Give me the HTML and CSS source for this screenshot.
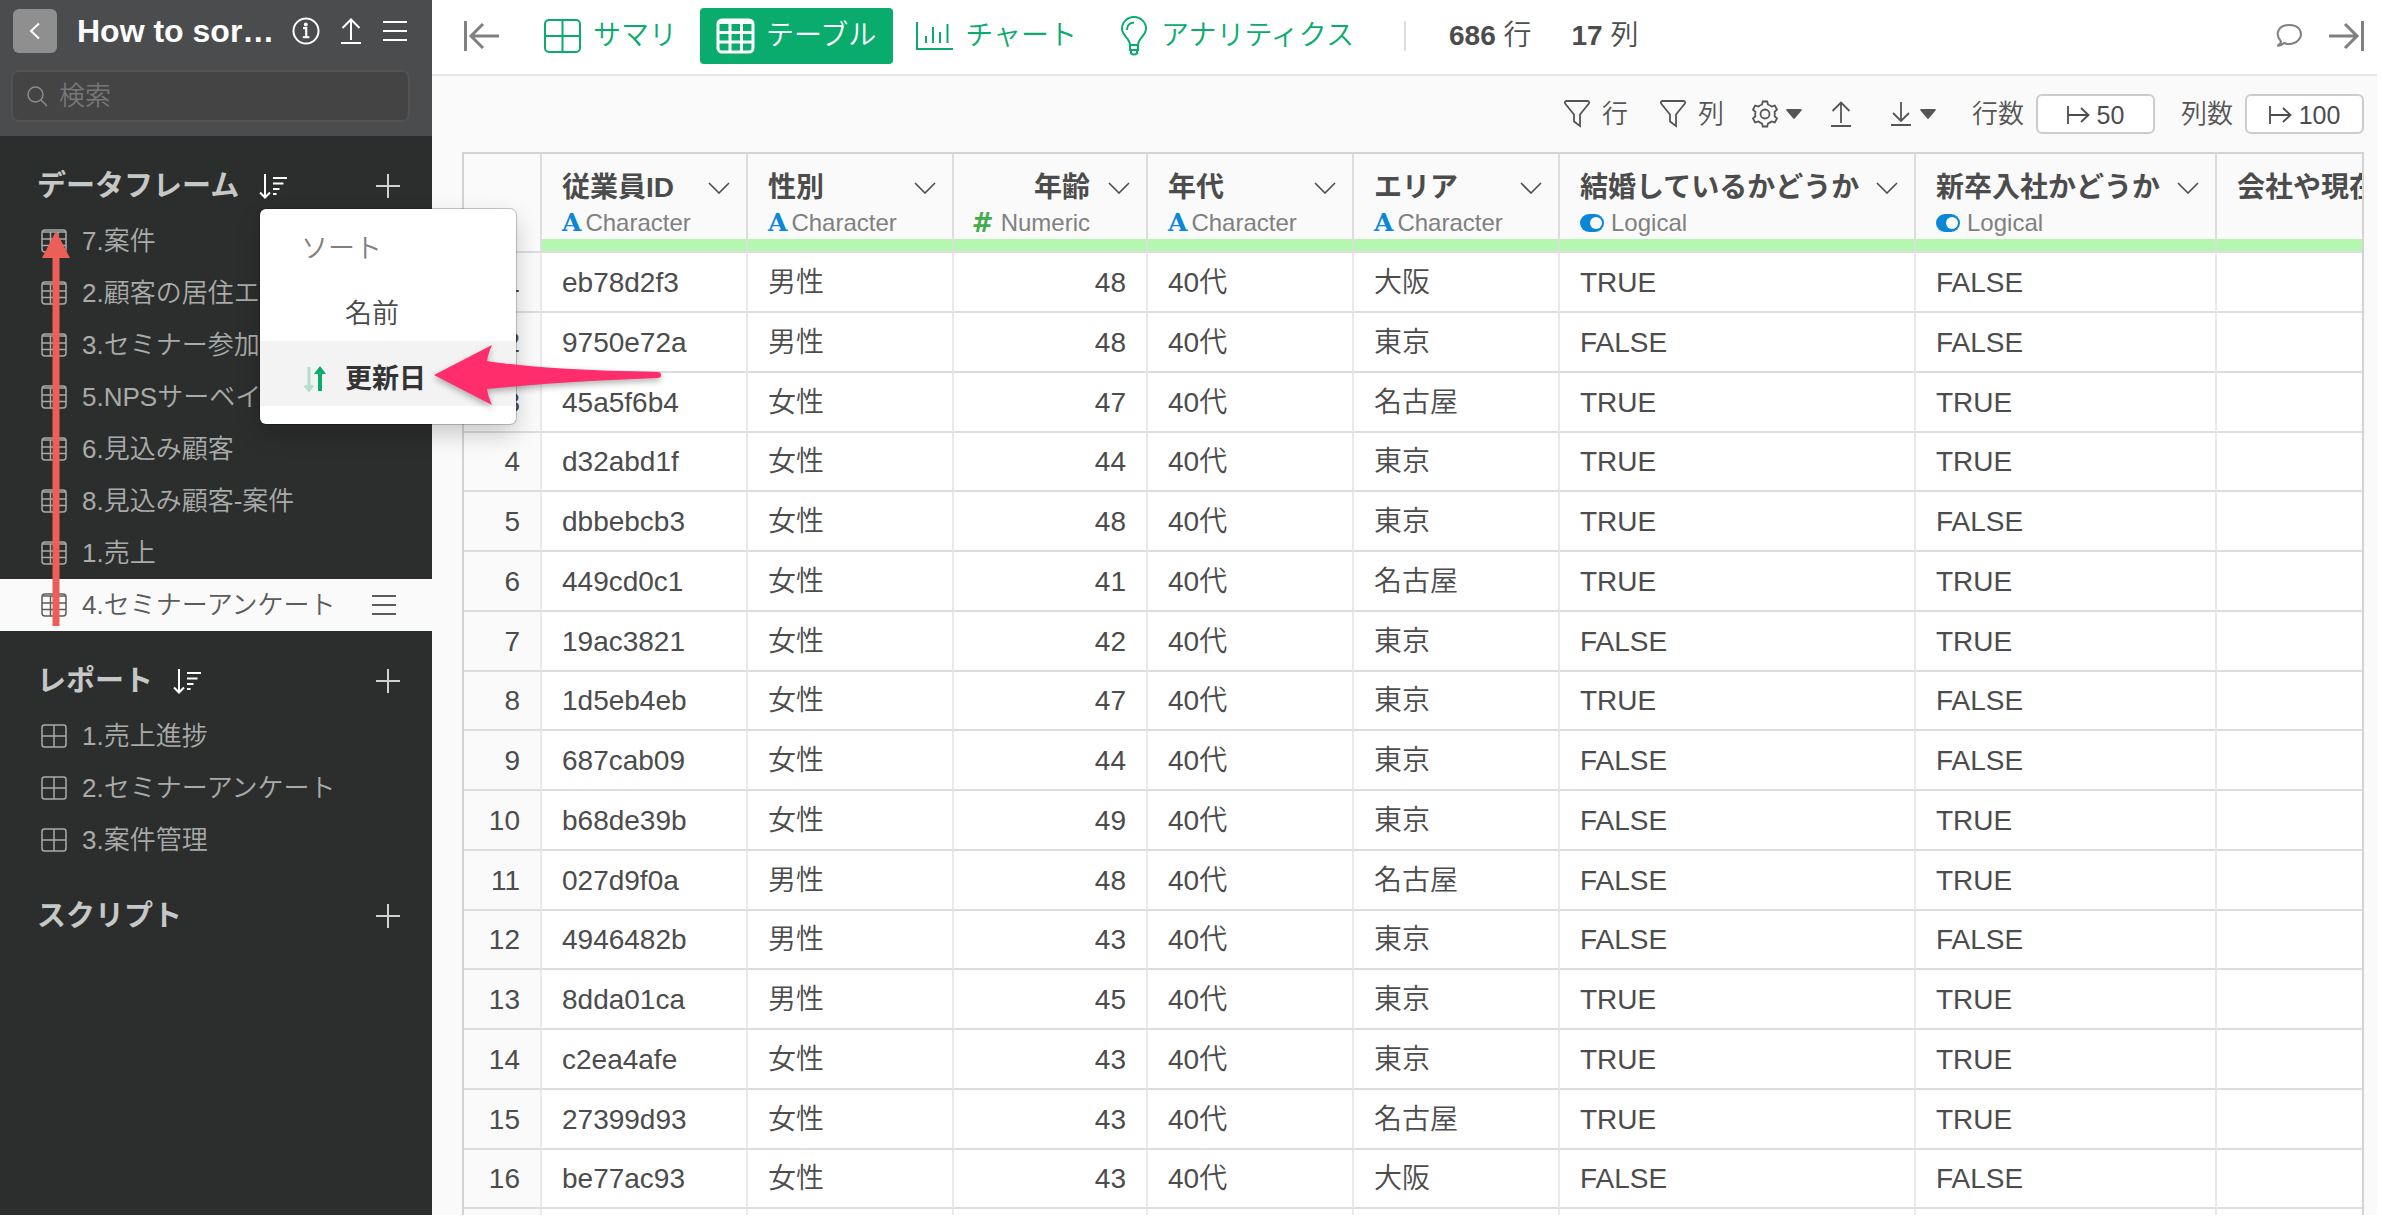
FILE: index.html
```html
<!DOCTYPE html>
<html lang="ja">
<head>
<meta charset="utf-8">
<title>データフレーム</title>
<link rel="stylesheet" href="styles.css">
</head>
<body>
<svg class="defs" aria-hidden="true">
  <symbol id="grid3" viewBox="0 0 26 24">
    <rect x="1" y="1" width="24" height="22" rx="3"/>
    <path d="M1.500 3h23"/>
    <path d="M1 10h24M1 16.500h24M9.500 3v20M17 3v20"/>
  </symbol>
  <symbol id="grid2" viewBox="0 0 26 24">
    <rect x="1" y="1" width="24" height="22" rx="2.500"/>
    <path d="M1 12h24M13 1v22"/>
  </symbol>
  <symbol id="sort" viewBox="0 0 28 26">
    <path d="M6 1v23M1 19.500l5 5 5-5M14 5h14M14 10.500h10.500M14 16h6.500M14 21h3.500"/>
  </symbol>
  <symbol id="plus" viewBox="0 0 24 24"><path d="M12 0v24M0 12h24"/></symbol>
  <symbol id="bars" viewBox="0 0 26 22"><path d="M1 2h24M1 11h24M1 20h24"/></symbol>
  <symbol id="up" viewBox="0 0 22 26"><path d="M11 22V2M2.500 10L11 1.500 19.500 10M1 25h20"/></symbol>
  <symbol id="down" viewBox="0 0 22 26"><path d="M11 1v19M3 12l8 8 8-8M1 24h20"/></symbol>
  <symbol id="chev" viewBox="0 0 22 12"><path d="M1 1l10 10L21 1"/></symbol>
  <symbol id="caret" viewBox="0 0 16 10"><path d="M1.500 0h13a1 1 0 0 1 .8 1.800L9 9.200a1.400 1.400 0 0 1-2 0L.7 1.800A1 1 0 0 1 1.500 0z"/></symbol>
  <symbol id="filter" viewBox="0 0 26 28"><path d="M2 1h22q2 1 .5 3L16 14.500V26l-6-4.500v-7L1.500 4Q0 2 2 1z"/></symbol>
  <symbol id="limit" viewBox="0 0 24 18"><path d="M1 0v18M1 9h20M14 2l7.500 7-7.500 7"/></symbol>
  <symbol id="toggle" viewBox="0 0 24 18"><rect x="0" y="0" width="24" height="18" rx="9" fill="#0a87d6"/><circle cx="16" cy="9" r="6" fill="#fafafa"/></symbol>
</svg>
<div class="app">
  <aside class="sidebar">
    <header class="project">
      <div class="project-row">
        <button class="back" aria-label="戻る"><svg width="12" height="18" viewBox="0 0 12 18"><path d="M10 1.500L2 9l8 7.500"/></svg></button>
        <h1>How to sor…</h1>
        <button aria-label="情報"><svg width="28" height="28" viewBox="0 0 28 28"><circle cx="14" cy="14" r="12.500"/><path d="M11 11.200h3.200V20" stroke-width="2.200"/><path d="M10.800 20.200h6.600"/><circle cx="13.800" cy="7.600" r="1" fill="currentColor"/></svg></button>
        <button aria-label="公開"><svg width="22" height="26"><use href="#up"/></svg></button>
        <button aria-label="メニュー"><svg width="26" height="22"><use href="#bars"/></svg></button>
      </div>
      <label class="search">
        <svg width="20" height="20" viewBox="0 0 20 20"><circle cx="8.500" cy="8.500" r="7.500"/><path d="M14 14l6 6"/></svg>
        <input type="text" placeholder="検索" aria-label="検索">
      </label>
    </header>

    <section>
      <div class="section-head">
        <h2>データフレーム</h2>
        <button class="sort" aria-label="ソート"><svg width="28" height="26"><use href="#sort"/></svg></button>
        <button aria-label="追加"><svg width="24" height="24"><use href="#plus"/></svg></button>
        <div class="menu">
          <p>ソート</p>
          <button>名前</button>
          <button class="on"><svg width="22" height="26" viewBox="0 0 22 26"><path d="M5 1v22M1 19.500l4 4.500 4-4.500" stroke="#b3dfcb" stroke-width="3"/><path d="M16 25V4" stroke="#0aac6c" stroke-width="4"/><path d="M16 0l6 8H10z" fill="#0aac6c" stroke="none"/></svg>更新日</button>
        </div>
      </div>
      <ul class="items">
        <li><a href="#"><svg width="26" height="24"><use href="#grid3"/></svg>7.案件</a></li>
        <li><a href="#"><svg width="26" height="24"><use href="#grid3"/></svg>2.顧客の居住エリア</a></li>
        <li><a href="#"><svg width="26" height="24"><use href="#grid3"/></svg>3.セミナー参加者</a></li>
        <li><a href="#"><svg width="26" height="24"><use href="#grid3"/></svg>5.NPSサーベイ</a></li>
        <li><a href="#"><svg width="26" height="24"><use href="#grid3"/></svg>6.見込み顧客</a></li>
        <li><a href="#"><svg width="26" height="24"><use href="#grid3"/></svg>8.見込み顧客-案件</a></li>
        <li><a href="#"><svg width="26" height="24"><use href="#grid3"/></svg>1.売上</a></li>
        <li class="selected"><a href="#"><svg width="26" height="24"><use href="#grid3"/></svg>4.セミナーアンケート</a><button aria-label="操作"><svg width="26" height="22"><use href="#bars"/></svg></button></li>
      </ul>
    </section>

    <section>
      <div class="section-head">
        <h2>レポート</h2>
        <button class="sort" aria-label="ソート"><svg width="28" height="26"><use href="#sort"/></svg></button>
        <button aria-label="追加"><svg width="24" height="24"><use href="#plus"/></svg></button>
      </div>
      <ul class="items">
        <li><a href="#"><svg width="26" height="24"><use href="#grid2"/></svg>1.売上進捗</a></li>
        <li><a href="#"><svg width="26" height="24"><use href="#grid2"/></svg>2.セミナーアンケート</a></li>
        <li><a href="#"><svg width="26" height="24"><use href="#grid2"/></svg>3.案件管理</a></li>
      </ul>
    </section>

    <section>
      <div class="section-head">
        <h2>スクリプト</h2>
        <button aria-label="追加"><svg width="24" height="24"><use href="#plus"/></svg></button>
      </div>
    </section>
  </aside>

  <main>
    <header class="topbar">
      <button class="edge" aria-label="左を閉じる"><svg width="36" height="32" viewBox="0 0 36 32"><path d="M1.500 1v30M35 16H7M19 4L7 16l12 12"/></svg></button>
      <nav>
        <button><svg width="37" height="34" viewBox="0 0 37 34"><rect x="1" y="1" width="35" height="32" rx="4"/><path d="M1 17h35M18.500 1v32"/></svg>サマリ</button>
        <button class="active"><svg width="37" height="34" viewBox="0 0 37 34"><rect x="1" y="1" width="35" height="32" rx="4"/><path d="M1 3h35" stroke-width="4"/><path d="M1 13.500h35M1 23h35M13 3v30M24.500 3v30"/></svg>テーブル</button>
        <button><svg width="37" height="28" viewBox="0 0 37 28"><path d="M1 0v27h36M10 14v7M17 5v16M24 10v11M31.500 2v19"/></svg>チャート</button>
        <button><svg width="32" height="40" viewBox="0 0 32 40"><path d="M13 29c0-7-8-9-8-16.500a12 11.500 0 0 1 24 0C29 20 21 22 21 29zM13 29v5h8v-5M14 34v3.500q3 2 6 0V34M10 14q0-7 7-7.500"/></svg>アナリティクス</button>
      </nav>
      <div class="counts"><span><b>686</b> 行</span><span><b>17</b> 列</span></div>
      <button class="comment" aria-label="コメント"><svg width="26" height="24" viewBox="0 0 26 24"><path d="M5 17.500C-2 9.500 3 1 13 1s12 6 12 9.500S21 20 13 20q-3 0-5-1-3 3-6.500 3Q4.500 20.500 5 17.500z"/></svg></button>
      <button class="edge" aria-label="右を閉じる"><svg width="36" height="32" viewBox="0 0 36 32"><path d="M34.500 1v30M1 16h28M17 4l12 12-12 12"/></svg></button>
    </header>

    <div class="toolbar">
      <button><svg width="26" height="28"><use href="#filter"/></svg>行</button>
      <button class="cols"><svg width="26" height="28"><use href="#filter"/></svg>列</button>
      <button class="drop" aria-label="設定"><svg width="26" height="28" viewBox="-13 -14 26 28"><path d="M-3-9.500L-2.200-12.500H2.200L3-9.500Q5-8.800 6.500-7.500L9.800-8.400 12-4.500 9.600-2.200Q10 0 9.600 2.200L12 4.500 9.800 8.400 6.500 7.500Q5 8.800 3 9.500L2.200 12.500H-2.200L-3 9.500Q-5 8.800-6.500 7.500L-9.800 8.400-12 4.500-9.600 2.200Q-10 0-9.600-2.200L-12-4.500-9.800-8.400-6.500-7.500Q-5-8.800-3-9.500z"/><circle r="4.500"/></svg><svg class="solid" width="16" height="10"><use href="#caret"/></svg></button>
      <button class="upload" aria-label="アップロード"><svg width="22" height="26"><use href="#up"/></svg></button>
      <button class="drop download" aria-label="ダウンロード"><svg width="22" height="26"><use href="#down"/></svg><svg class="solid" width="16" height="10"><use href="#caret"/></svg></button>
      <div class="limit"><span id="rows-label">行数</span><button aria-labelledby="rows-label"><svg width="24" height="18"><use href="#limit"/></svg>50</button></div>
      <div class="limit"><span id="cols-label">列数</span><button aria-labelledby="cols-label"><svg width="24" height="18"><use href="#limit"/></svg>100</button></div>
    </div>

    <div class="sheet">
      <table>
        <colgroup><col class="c-no"><col class="c-m"><col class="c-m"><col class="c-s"><col class="c-m"><col class="c-m"><col class="c-xl"><col class="c-l"><col></colgroup>
        <thead>
          <tr>
            <th></th>
            <th><div class="name">従業員ID<svg width="22" height="12"><use href="#chev"/></svg></div><div class="type"><b class="chr">A</b>Character</div><div class="fill"></div></th>
            <th><div class="name">性別<svg width="22" height="12"><use href="#chev"/></svg></div><div class="type"><b class="chr">A</b>Character</div><div class="fill"></div></th>
            <th class="num"><div class="name">年齢<svg width="22" height="12"><use href="#chev"/></svg></div><div class="type"><b class="hash">#</b>Numeric</div><div class="fill"></div></th>
            <th><div class="name">年代<svg width="22" height="12"><use href="#chev"/></svg></div><div class="type"><b class="chr">A</b>Character</div><div class="fill"></div></th>
            <th><div class="name">エリア<svg width="22" height="12"><use href="#chev"/></svg></div><div class="type"><b class="chr">A</b>Character</div><div class="fill"></div></th>
            <th><div class="name">結婚しているかどうか<svg width="22" height="12"><use href="#chev"/></svg></div><div class="type"><svg width="24" height="18"><use href="#toggle"/></svg>Logical</div><div class="fill"></div></th>
            <th><div class="name">新卒入社かどうか<svg width="22" height="12"><use href="#chev"/></svg></div><div class="type"><svg width="24" height="18"><use href="#toggle"/></svg>Logical</div><div class="fill"></div></th>
            <th><div class="name">会社や現在</div><div class="type"></div><div class="fill"></div></th>
          </tr>
        </thead>
        <tbody>
          <tr><th>1</th><td>eb78d2f3</td><td>男性</td><td>48</td><td>40代</td><td>大阪</td><td>TRUE</td><td>FALSE</td><td></td></tr>
          <tr><th>2</th><td>9750e72a</td><td>男性</td><td>48</td><td>40代</td><td>東京</td><td>FALSE</td><td>FALSE</td><td></td></tr>
          <tr><th>3</th><td>45a5f6b4</td><td>女性</td><td>47</td><td>40代</td><td>名古屋</td><td>TRUE</td><td>TRUE</td><td></td></tr>
          <tr><th>4</th><td>d32abd1f</td><td>女性</td><td>44</td><td>40代</td><td>東京</td><td>TRUE</td><td>TRUE</td><td></td></tr>
          <tr><th>5</th><td>dbbebcb3</td><td>女性</td><td>48</td><td>40代</td><td>東京</td><td>TRUE</td><td>FALSE</td><td></td></tr>
          <tr><th>6</th><td>449cd0c1</td><td>女性</td><td>41</td><td>40代</td><td>名古屋</td><td>TRUE</td><td>TRUE</td><td></td></tr>
          <tr><th>7</th><td>19ac3821</td><td>女性</td><td>42</td><td>40代</td><td>東京</td><td>FALSE</td><td>TRUE</td><td></td></tr>
          <tr><th>8</th><td>1d5eb4eb</td><td>女性</td><td>47</td><td>40代</td><td>東京</td><td>TRUE</td><td>FALSE</td><td></td></tr>
          <tr><th>9</th><td>687cab09</td><td>女性</td><td>44</td><td>40代</td><td>東京</td><td>FALSE</td><td>FALSE</td><td></td></tr>
          <tr><th>10</th><td>b68de39b</td><td>女性</td><td>49</td><td>40代</td><td>東京</td><td>FALSE</td><td>TRUE</td><td></td></tr>
          <tr><th>11</th><td>027d9f0a</td><td>男性</td><td>48</td><td>40代</td><td>名古屋</td><td>FALSE</td><td>TRUE</td><td></td></tr>
          <tr><th>12</th><td>4946482b</td><td>男性</td><td>43</td><td>40代</td><td>東京</td><td>FALSE</td><td>FALSE</td><td></td></tr>
          <tr><th>13</th><td>8dda01ca</td><td>男性</td><td>45</td><td>40代</td><td>東京</td><td>TRUE</td><td>TRUE</td><td></td></tr>
          <tr><th>14</th><td>c2ea4afe</td><td>女性</td><td>43</td><td>40代</td><td>東京</td><td>TRUE</td><td>TRUE</td><td></td></tr>
          <tr><th>15</th><td>27399d93</td><td>女性</td><td>43</td><td>40代</td><td>名古屋</td><td>TRUE</td><td>TRUE</td><td></td></tr>
          <tr><th>16</th><td>be77ac93</td><td>女性</td><td>43</td><td>40代</td><td>大阪</td><td>FALSE</td><td>FALSE</td><td></td></tr>
          <tr><th></th><td></td><td></td><td></td><td></td><td></td><td></td><td></td><td></td></tr>
        </tbody>
      </table>
    </div>
  </main>

  <svg class="mark mark-red" width="28" height="395" viewBox="0 0 28 395"><path d="M14 0l14 27H17.500v368h-7V27H0z" fill="#ec5f58"/></svg>
  <svg class="mark mark-pink" width="230" height="64" viewBox="0 0 230 64"><path d="M0 31L58 1q-4 9-5 16Q110 26 224 28q3 0 3 3t-3 3Q120 38 53 45q1 7 5 16z" fill="#ff2d6b"/></svg>
</div>
</body>
</html>
```
FILE: styles.css
```css
* { box-sizing: border-box; }

body {
  margin: 0;
  background: #fff;
  color: #4c4c4c;
  font: 350 27px/34px "Liberation Sans", "Noto Sans CJK JP", sans-serif;
}

h1, h2, p, ul { margin: 0; padding: 0; }
ul { list-style: none; }
a { color: inherit; text-decoration: none; }
b { font-weight: 700; }

button {
  display: flex;
  align-items: center;
  padding: 0;
  border: 0;
  background: none;
  color: inherit;
  font: inherit;
  white-space: nowrap;
}

svg {
  display: block;
  flex: none;
  fill: none;
  stroke: currentColor;
  stroke-width: 2;
  overflow: visible;
}
svg.solid { fill: currentColor; stroke: none; }
.defs { position: absolute; width: 0; height: 0; }
#toggle { stroke: none; }

.app {
  position: relative;
  display: flex;
  height: calc(100vh - 5px);
  margin-right: 5px;
  background: #fafafa;
}

/* Sidebar */
.sidebar {
  flex: none;
  width: 432px;
  background: #2c2e2d;
  color: #a9abaa;
}
.project {
  display: flex;
  flex-direction: column;
  gap: 17px;
  padding: 9px 22px 14px 11px;
  background: #4b4c4d;
  color: #fff;
}
.project-row {
  display: flex;
  align-items: center;
  gap: 20px;
  height: 44px;
  padding: 0 2px;
}
.back {
  flex: none;
  justify-content: center;
  width: 44px;
  height: 44px;
  border-radius: 6px;
  background: #8f8f8f;
}
h1 {
  flex: 1;
  min-width: 0;
  font-size: 32px;
  font-weight: 700;
  white-space: nowrap;
}
.search {
  display: flex;
  align-items: center;
  gap: 12px;
  height: 52px;
  padding: 0 14px;
  border: 2px solid #525252;
  border-radius: 8px;
  background: #444;
  color: #8c8c8c;
}
.search input {
  flex: 1;
  min-width: 0;
  padding: 0;
  border: 0;
  outline: 0;
  background: none;
  color: #ccc;
  font: inherit;
  font-size: 26px;
}
.search input::placeholder { color: #777; opacity: 1; }
.search svg { stroke-width: 1.500; }

.section-head {
  position: relative;
  display: flex;
  align-items: center;
  height: 58px;
  margin-top: 21px;
  padding: 0 32px 0 37px;
  color: #d0d2d1;
}
.section-head > button { margin-left: auto; }
.section-head > .sort { margin-left: 20px; color: #fff; }
h2 { font-size: 29px; font-weight: 700; color: #c6c8c7; }

.items li {
  display: flex;
  align-items: center;
  justify-content: space-between;
  height: 52px;
  padding: 0 35px 0 41px;
}
.items a {
  display: flex;
  align-items: center;
  gap: 15px;
  font-size: 26px;
  white-space: nowrap;
}
.items a svg { stroke-width: 1.500; }
.items .selected { background: #fafafa; color: #5c5c5c; }

.menu {
  position: absolute;
  z-index: 2;
  top: 52px;
  left: 260px;
  width: 256px;
  padding: 2px 0 18px;
  border-radius: 6px;
  background: #fff;
  color: #4a4a4a;
  box-shadow: 0 0 0 1px rgba(0, 0, 0, .2), 0 10px 24px rgba(0, 0, 0, .2);
}
.menu p, .menu button {
  display: flex;
  align-items: center;
  width: 100%;
  height: 65px;
  padding: 10px 0 0 85px;
}
.menu p { padding-left: 41px; color: #808080; }
.menu .on {
  gap: 19px;
  padding-left: 44px;
  background: #f3f3f3;
  color: #333;
  font-weight: 700;
}

/* Main column */
main {
  display: flex;
  flex: 1;
  flex-direction: column;
  min-width: 0;
}
.topbar {
  display: flex;
  align-items: center;
  height: 76px;
  padding: 8px 13px 10px 32px;
  border-bottom: 2px solid #e6e6e6;
  background: #fff;
  font-size: 28px;
}
.edge { color: #808080; }
.edge svg { stroke-width: 3; }
.topbar nav {
  display: flex;
  gap: 6px;
  margin: 0 33px 0 27px;
}
.topbar nav button {
  gap: 12px;
  height: 56px;
  padding: 0 17px;
  border-radius: 4px;
  color: #09ac6c;
}
.topbar nav .active { background: #09ac6c; color: #fff; }
.active svg { stroke-width: 3; }
.counts {
  display: flex;
  flex: 1;
  gap: 40px;
  padding-left: 43px;
  border-left: 2px solid #ddd;
  line-height: 30px;
}
.comment { margin-right: 26px; color: #808080; }

.toolbar {
  display: flex;
  align-items: center;
  justify-content: flex-end;
  height: 76px;
  padding: 0 13px;
  color: #555;
  font-size: 26px;
}
.toolbar svg:not(.solid) { stroke-width: 1.800; }
.toolbar > button { gap: 12px; margin-right: 32px; }
.toolbar > .cols { margin-right: 28px; }
.toolbar > .drop { gap: 8px; margin-right: 28px; }
.toolbar > .upload { margin-right: 38px; }
.toolbar > .download { margin-right: 36px; }
.limit {
  display: flex;
  align-items: center;
  gap: 12px;
}
.limit + .limit { margin-left: 26px; }
.limit button {
  justify-content: center;
  gap: 6px;
  width: 119px;
  height: 40px;
  padding-top: 2px;
  border: 2px solid #ccc;
  border-radius: 6px;
  background: #fff;
  color: #4c4c4c;
  font-size: 25px;
}

.sheet {
  flex: 1;
  min-height: 0;
  margin: 0 13px 0 30px;
  overflow: hidden;
  border: 2px solid #d3d3d3;
  border-bottom: 0;
  background: #fff;
}
table {
  width: 100%;
  table-layout: fixed;
  border-collapse: separate;
  border-spacing: 0;
}
.c-no { width: 78px; }
.c-s { width: 194px; }
.c-m { width: 206px; }
.c-l { width: 301px; }
.c-xl { width: 356px; }

th, td {
  overflow: hidden;
  padding: 1px 20px 0;
  border: 0 solid #ddd;
  border-right-color: #e9e9e9;
  border-width: 0 2px 2px 0;
  font-size: 28px;
  text-align: left;
  white-space: nowrap;
}
th:last-child, td:last-child { border-right: 0; }
thead th {
  height: 99px;
  padding: 17px 0 0;
  border-right-color: #ddd;
  background: #fafafa;
  vertical-align: top;
}
tbody tr { height: 60px; }
tbody tr:nth-child(4n) { height: 59px; }
tbody th { background: #fafafa; font-weight: 350; text-align: right; }
tbody td:nth-child(4) { text-align: right; }

.name {
  display: flex;
  align-items: center;
  justify-content: space-between;
  height: 34px;
  padding: 0 16px 0 20px;
  font-weight: 700;
}
.name svg { stroke-width: 1.600; }
.type {
  display: flex;
  align-items: center;
  gap: 4px;
  height: 30px;
  margin: 3px 0 1px;
  padding-left: 20px;
  color: #808080;
  font-size: 24px;
  font-weight: 350;
}
.type svg { margin-right: 3px; }
.fill { height: 12px; background: #b4f7b1; }
.num .name { justify-content: flex-end; gap: 18px; }
.num .type { justify-content: flex-end; gap: 7px; padding-right: 56px; }
.chr { color: #0a87d6; font-family: "DejaVu Serif", serif; font-size: 25px; }
.hash { color: #43ab4b; font-family: "DejaVu Sans", sans-serif; font-size: 26px; }

/* Annotations drawn over the window */
.mark { position: absolute; z-index: 3; stroke: none; }
.mark-red { left: 42px; top: 231px; }
.mark-pink { left: 434px; top: 344px; filter: drop-shadow(0 3px 3px rgba(0, 0, 0, .3)); }
```
